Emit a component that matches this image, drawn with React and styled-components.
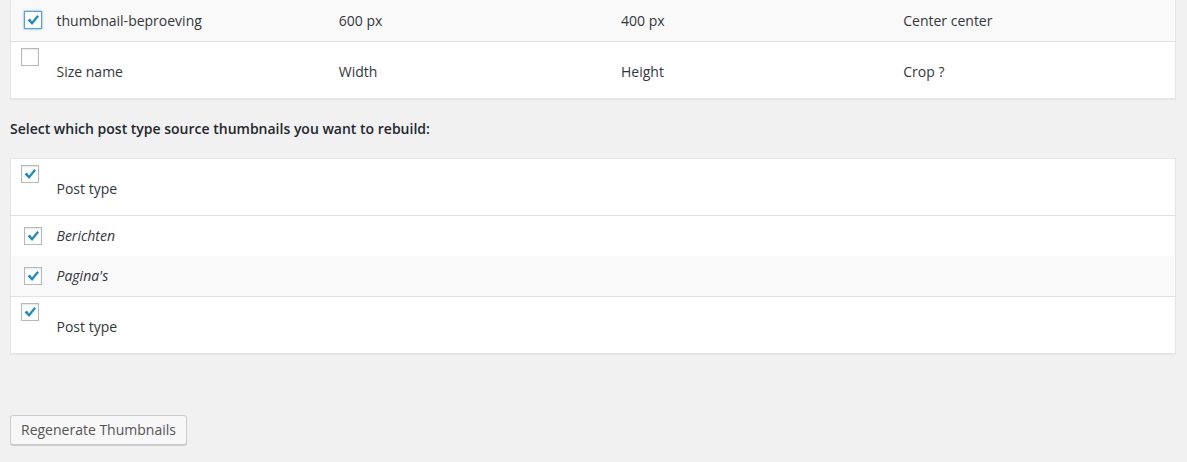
import React from "react";
import styled, { createGlobalStyle } from "styled-components";

const GlobalStyle = createGlobalStyle`
  html, body {
    margin: 0;
    padding: 0;
    background: #f1f1f1;
  }
  body {
    font-family: "Open Sans", "Noto Sans", sans-serif;
    font-size: 14px;
    color: #32373c;
  }
`;

const Page = styled.div`
  padding: 0 11px 0 10px;
  height: 462px;
  box-sizing: border-box;
  overflow: hidden;
`;

const Table = styled.table`
  width: 100%;
  border-collapse: collapse;
  background: #fff;
  border: 1px solid #e5e5e5;
  border-top: ${(p) => (p.$cut ? "none" : "1px solid #e5e5e5")};
  box-shadow: 0 1px 1px rgba(0, 0, 0, 0.04);
  table-layout: fixed;
`;

const Row = styled.tr`
  background: ${(p) => (p.$striped ? "#f9f9f9" : "#fff")};
  border-top: ${(p) => (p.$line ? "1px solid #e1e1e1" : "none")};
  height: ${(p) => p.$h}px;
`;

const CheckCell = styled.td`
  width: 36px;
  padding: ${(p) => (p.$head ? "6px 0 0 10px" : "0 0 0 13px")};
  vertical-align: ${(p) => (p.$head ? "top" : "middle")};
  box-sizing: border-box;
`;

const Cell = styled.td`
  padding: 0 10px;
  vertical-align: middle;
  font-style: ${(p) => (p.$italic ? "italic" : "normal")};
  padding-top: ${(p) => (p.$head ? "3px" : "0")};
  white-space: nowrap;
`;

const Box = styled.span`
  display: block;
  width: 16px;
  height: 16px;
  border: 1px solid ${(p) => (p.$focus ? "#5b9dd9" : "#b4b9be")};
  background: #fff;
  box-shadow: ${(p) =>
    p.$focus
      ? "0 0 2px rgba(30,140,190,.8)"
      : "inset 0 1px 2px rgba(0,0,0,.1)"};
  position: relative;
`;

const Heading = styled.p`
  margin: 0;
  padding: 20px 0 0;
  height: 59px;
  box-sizing: border-box;
  font-weight: 600;
  font-size: 14px;
  color: #23282d;
`;

const Button = styled.button`
  margin-top: 61px;
  height: 30px;
  padding: 0 10px 1px;
  font-family: "Open Sans", "Noto Sans", sans-serif;
  font-size: 14px;
  color: #555;
  background: #f7f7f7;
  border: 1px solid #ccc;
  border-radius: 3px;
  box-shadow: 0 1px 0 #ccc;
  cursor: pointer;
`;

const Tick = () => (
  <svg
    width="16"
    height="16"
    viewBox="0 0 16 16"
    style={{ position: "absolute", left: 0, top: 0 }}
  >
    <path d="M2.5 8.2 L5 6.6 L7 9.4 L12.2 3 L14 4.6 L7.1 13 Z" fill="#1e8cbe" />
  </svg>
);

const Check = ({ checked, focus }) => (
  <Box $focus={focus}>{checked && <Tick />}</Box>
);

const SizesTable = () => (
  <Table $cut>
    <colgroup>
      <col style={{ width: 36 }} />
      <col />
      <col />
      <col />
      <col />
    </colgroup>
    <tbody>
      <Row $striped $h={41}>
        <CheckCell>
          <Check checked focus />
        </CheckCell>
        <Cell>thumbnail-beproeving</Cell>
        <Cell>600 px</Cell>
        <Cell>400 px</Cell>
        <Cell>Center center</Cell>
      </Row>
      <Row $line $h={57}>
        <CheckCell $head>
          <Check />
        </CheckCell>
        <Cell $head>Size name</Cell>
        <Cell $head>Width</Cell>
        <Cell $head>Height</Cell>
        <Cell $head>Crop ?</Cell>
      </Row>
    </tbody>
  </Table>
);

const postTypes = ["Berichten", "Pagina's"];

const PostTypesTable = () => (
  <Table>
    <colgroup>
      <col style={{ width: 36 }} />
      <col />
    </colgroup>
    <tbody>
      <Row $h={57}>
        <CheckCell $head>
          <Check checked />
        </CheckCell>
        <Cell $head>Post type</Cell>
      </Row>
      {postTypes.map((name, i) => (
        <Row key={name} $line={i === 0} $striped={i % 2 === 1} $h={i === 0 ? 41 : 40}>
          <CheckCell>
            <Check checked />
          </CheckCell>
          <Cell $italic>{name}</Cell>
        </Row>
      ))}
      <Row $line $h={57}>
        <CheckCell $head>
          <Check checked />
        </CheckCell>
        <Cell $head>Post type</Cell>
      </Row>
    </tbody>
  </Table>
);

export default function App() {
  return (
    <Page>
      <GlobalStyle />
      <SizesTable />
      <Heading>Select which post type source thumbnails you want to rebuild:</Heading>
      <PostTypesTable />
      <Button>Regenerate Thumbnails</Button>
    </Page>
  );
}
